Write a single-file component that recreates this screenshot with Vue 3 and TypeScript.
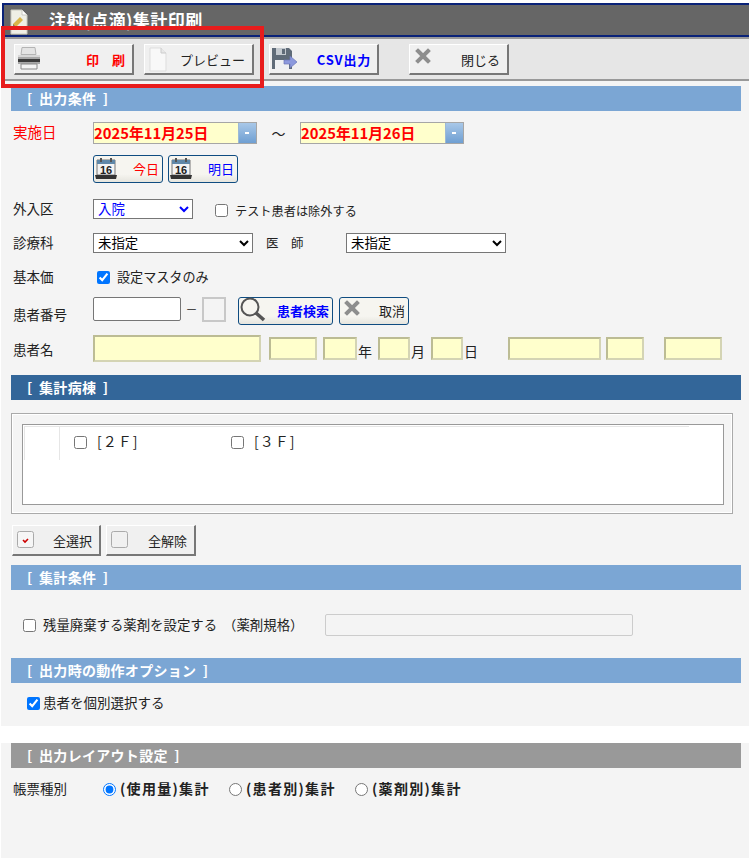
<script setup lang="ts">
import { ref } from 'vue'

const excludeTest = ref(false)
const masterOnly = ref(true)
const wardChecks = ref([
  { label: '[２Ｆ]', on: false },
  { label: '[３Ｆ]', on: false },
])
const wasteDrug = ref(false)
const pickPatient = ref(true)
const reportType = ref('use')
const reportTypes = [
  { id: 'use', label: '(使用量)集計' },
  { id: 'patient', label: '(患者別)集計' },
  { id: 'drug', label: '(薬剤別)集計' },
]
</script>

<template>
  <div class="root">
    <div class="main">
      <div class="title">
        <svg class="title-icon" width="18" height="26" viewBox="0 0 18 26">
          <path d="M1 1h11l5 5v19H1z" fill="#efefe6" stroke="#c9c9c0" />
          <path d="M12 1v5h5" fill="#fff" stroke="#c9c9c0" />
          <path d="M3 15l7-7 3 3-7 7-3 1z" fill="#d9b64a" />
          <path d="M3 15l3 3-3 1z" fill="#777" />
        </svg>
        <span class="title-text">注射(点滴)集計印刷</span>
      </div>

      <div class="toolbar">
        <button class="tool w120">
          <svg width="26" height="26" viewBox="0 0 26 26">
            <path d="M6 1.5h13l1 7H5z" fill="#e4e4e4" stroke="#b4b4b4" />
            <path d="M2 9h22v9H2z" fill="#a8a8a8" />
            <path d="M2 9h22v2H2z" fill="#d8d8d8" />
            <path d="M2 13h22v3H2z" fill="#3c3c3c" />
            <path d="M5 18h16v5H5z" fill="#f4f4f4" stroke="#8a8a8a" />
          </svg>
          <span class="t-red bold">印　刷</span>
        </button>
        <button class="tool w110">
          <svg width="26" height="26" viewBox="0 0 26 26">
            <path d="M4 2h11l5 5v18H4z" fill="#f8f8f8" stroke="#ddd" />
            <path d="M15 2v5h5" fill="#e8e8e8" stroke="#ccc" />
          </svg>
          <span>プレビュー</span>
        </button>
        <button class="tool w110 ml15">
          <svg width="26" height="24" viewBox="0 0 26 24">
            <path d="M1 1h17l3 3v18H1z" fill="#5f6b78" />
            <path d="M5 1h10v7H5z" fill="#c3c9cf" />
            <path d="M11 2h3v5h-3z" fill="#5f6b78" />
            <path d="M4 13h14v9H4z" fill="#eef0f2" />
            <path d="M13 13h6V9l7 6-7 6v-4h-6z" fill="#8c99dd" stroke="#6a76b8" stroke-width=".7" />
          </svg>
          <span class="t-blue bold csv">CSV出力</span>
        </button>
        <button class="tool w100 ml30">
          <svg class="x" width="16" height="16" viewBox="0 0 16 16">
            <path d="M3 3l10 10M13 3L3 13" stroke="#8e8e8e" stroke-width="4" stroke-linecap="square" />
          </svg>
          <span>閉じる</span>
        </button>
      </div>

      <div class="form">
        <h2 class="head light">[ 出力条件 ]</h2>

        <div class="row date-row">
          <label class="lab t-red strong">実施日</label>
          <div class="date">
            <input class="date-input" value="2025年11月25日" />
            <span class="date-btn"></span>
          </div>
          <span class="tilde">～</span>
          <div class="date">
            <input class="date-input" value="2025年11月26日" />
            <span class="date-btn"></span>
          </div>
        </div>

        <div class="row today-row">
          <button class="mini w70">
            <svg width="22" height="22" viewBox="0 0 22 22">
              <path d="M2 2h18v15H2z" fill="#f4f4f4" stroke="#777" />
              <path d="M2 2h18v4H2z" fill="#5f87a8" />
              <path d="M5 0h2v4H5zM15 0h2v4h-2z" fill="#555" />
              <path d="M0 17h22l-1 4H1z" fill="#333" />
              <text x="11" y="15.5" text-anchor="middle" class="cal">16</text>
            </svg>
            <span class="t-red">今日</span>
          </button>
          <button class="mini w70 ml5">
            <svg width="22" height="22" viewBox="0 0 22 22">
              <path d="M2 2h18v15H2z" fill="#f4f4f4" stroke="#777" />
              <path d="M2 2h18v4H2z" fill="#5f87a8" />
              <path d="M5 0h2v4H5zM15 0h2v4h-2z" fill="#555" />
              <path d="M0 17h22l-1 4H1z" fill="#333" />
              <text x="11" y="15.5" text-anchor="middle" class="cal">16</text>
            </svg>
            <span class="t-blue">明日</span>
          </button>
        </div>

        <div class="row r-gairai">
          <label class="lab">外入区</label>
          <select class="sel w100 t-blue"><option>入院</option></select>
          <label class="check small ml22">
            <input v-model="excludeTest" type="checkbox" />
            <span>テスト患者は除外する</span>
          </label>
        </div>

        <div class="row r-ka">
          <label class="lab">診療科</label>
          <select class="sel w160"><option>未指定</option></select>
          <label class="lab2">医　師</label>
          <select class="sel w160"><option>未指定</option></select>
        </div>

        <div class="row r-base">
          <label class="lab">基本価</label>
          <label class="check ml4">
            <input v-model="masterOnly" type="checkbox" />
            <span>設定マスタのみ</span>
          </label>
        </div>

        <div class="row r-no">
          <label class="lab low">患者番号</label>
          <input class="plain" />
          <span class="dash">－</span>
          <input class="square" />
          <button class="mini w95 ml12">
            <svg class="lens" width="26" height="26" viewBox="0 0 26 26">
              <circle cx="10" cy="10" r="8.5" fill="none" stroke="#555" stroke-width="2" />
              <path d="M16 16l8 7" stroke="#555" stroke-width="3.6" />
            </svg>
            <span class="t-blue bold">患者検索</span>
          </button>
          <button class="mini w70 ml6">
            <svg class="x" width="16" height="16" viewBox="0 0 16 16">
              <path d="M3 3l10 10M13 3L3 13" stroke="#8e8e8e" stroke-width="4" stroke-linecap="square" />
            </svg>
            <span>取消</span>
          </button>
        </div>

        <div class="row r-name">
          <label class="lab low name">患者名</label>
          <input class="yl big" />
          <input class="yl w48 ml8" />
          <input class="yl w34 ml6" />
          <span class="unit">年</span>
          <input class="yl w32" />
          <span class="unit">月</span>
          <input class="yl w32" />
          <span class="unit">日</span>
          <input class="yl w93 ml24" />
          <input class="yl w38 ml5" />
          <input class="yl w58 ml20" />
        </div>

        <h2 class="head dark h2">[ 集計病棟 ]</h2>

        <div class="ward-frame">
          <div class="ward">
            <div class="ward-lines">
              <div class="ward-blank"></div>
              <label v-for="w in wardChecks" :key="w.label" class="ward-item">
                <input v-model="w.on" type="checkbox" />
                <span>{{ w.label }}</span>
              </label>
            </div>
          </div>
        </div>

        <div class="row r-all">
          <button class="tool2 w89">
            <svg width="18" height="18" viewBox="0 0 18 18">
              <rect x=".5" y=".5" width="16" height="16" rx="2" fill="#f6f6f6" stroke="#aaa" />
              <path d="M6 9l2 2 3-3" fill="none" stroke="#c00" stroke-width="1.6" />
            </svg>
            <span>全選択</span>
          </button>
          <button class="tool2 w90">
            <svg width="18" height="18" viewBox="0 0 18 18">
              <rect x=".5" y=".5" width="16" height="16" rx="2" fill="#f0f0f0" stroke="#aaa" />
            </svg>
            <span>全解除</span>
          </button>
        </div>

        <h2 class="head light h3">[ 集計条件 ]</h2>

        <div class="row r-waste">
          <label class="check">
            <input v-model="wasteDrug" type="checkbox" />
            <span>残量廃棄する薬剤を設定する</span>
          </label>
          <span class="spec">（薬剤規格）</span>
          <input class="spec-input" disabled />
        </div>

        <h2 class="head light h4">[ 出力時の動作オプション ]</h2>

        <div class="row r-pick">
          <label class="check tight">
            <input v-model="pickPatient" type="checkbox" />
            <span>患者を個別選択する</span>
          </label>
        </div>
      </div>

      <div class="lower">
        <h2 class="head gray">[ 出力レイアウト設定 ]</h2>
        <div class="row r-type">
          <label class="lab">帳票種別</label>
          <label v-for="t in reportTypes" :key="t.id" class="radio">
            <input v-model="reportType" type="radio" name="type" :value="t.id" />
            <span>{{ t.label }}</span>
          </label>
        </div>
      </div>
    </div>
    <div class="mark"></div>
  </div>
</template>

<style scoped>
.root {
  position: relative;
  min-height: 858px;
  display: flex;
  font-family: "Noto Sans CJK JP", "Noto Sans", sans-serif;
  font-size: 13px;
  color: #222;
}
.main {
  flex: 1;
  margin-left: 1px;
  display: flex;
  flex-direction: column;
  min-width: 0;
}
button { font-family: inherit; font-size: 13px; color: #222; cursor: default; }
input, select { font-family: inherit; box-sizing: border-box; }

.title {
  margin: 3px 0 0 1px;
  height: 34px;
  box-sizing: border-box;
  background: #666;
  border-top: 2px solid #0a2278;
  border-bottom: 2px solid #0a2278;
  border-left: 2px solid #0a2278;
  display: flex;
  align-items: center;
  padding-left: 6px;
  overflow: hidden;
}
.title-icon { flex: none; margin-top: 3px; }
.title-text {
  margin-left: 21px;
  color: #fff;
  font-size: 17px;
  font-weight: 700;
  letter-spacing: .5px;
  line-height: 20px;
}

.toolbar {
  height: 44px;
  box-sizing: border-box;
  background: #e6e6e6;
  border-top: 2px solid #999;
  border-bottom: 2px solid #999;
  padding: 5px 0 0 13px;
  display: flex;
  align-items: flex-start;
}
.tool, .tool2 {
  height: 31px;
  box-sizing: border-box;
  background: #f0f0f0;
  border: 1px solid;
  border-color: #fff #777 #777 #fff;
  border-width: 1px 2px 2px 1px;
  border-radius: 0;
  display: flex;
  align-items: center;
  justify-content: space-between;
  padding: 0 7px 0 1px;
  margin: 0;
}
.tool + .tool { margin-left: 10px; }
.tool.ml15 { margin-left: 15px; }
.tool.ml30 { margin-left: 30px; }
.tool .x { margin-left: 4px; }
.x { margin-top: -6px; flex: none; }
.tool2 { padding: 0 7px 0 4px; }
.tool2 + .tool2 { margin-left: 5px; }
.csv { letter-spacing: .8px; margin-right: -1px; }
.w120 { width: 120px; }
.w110 { width: 110px; }
.w100 { width: 100px; }
.w89 { width: 89px; }
.w90 { width: 90px; }
.w95 { width: 95px; }
.w70 { width: 70px; }
.w160 { width: 160px; }
.w48 { width: 48px; }
.w34 { width: 34px; }
.w32 { width: 32px; }
.w93 { width: 93px; }
.w38 { width: 38px; }
.w58 { width: 58px; }

.t-red { color: #f00; }
.t-blue { color: #00f; }
.bold { font-weight: 700; }

.form {
  background: #f4f4f4;
  padding: 5px 0 14px;
}
.head {
  margin: 0 8px 0 10px;
  height: 25px;
  line-height: 24px;
  padding-left: 16px;
  font-size: 14px;
  font-weight: 700;
  color: #fff;
  letter-spacing: .3px;
  word-spacing: 3px;
}
.light { background: #7ba6d4; }
.dark { background: #336699; }
.gray { background: #999; }
.h2 { margin-top: 13px; }
.h3 { margin-top: 9px; }
.h4 { margin-top: 22px; }

.row { display: flex; align-items: center; padding-left: 12px; }
.lab {
  width: 80px;
  flex: none;
  font-size: 13.5px;
  line-height: 20px;
  padding-bottom: 2px;
  box-sizing: border-box;
  height: 22px;
}
.lab.strong { font-size: 14.5px; }
.lab.low { align-self: flex-end; margin-bottom: -1px; }
.lab.name { margin-bottom: 1px; }
.lab2 { width: 80px; margin-left: 13px; flex: none; font-size: 12.5px; padding-bottom: 2px; }

.date-row { margin-top: 11px; height: 22px; }
.date {
  width: 164px;
  height: 22px;
  box-sizing: border-box;
  border: 1px solid #a6a6a6;
  background: #ffc;
  display: flex;
}
.date-input {
  flex: 1;
  min-width: 0;
  border: 0;
  background: transparent;
  padding: 0 0 2px 0;
  color: #f00;
  font-size: 14.8px;
  font-weight: 700;
  outline: 0;
}
.date-btn {
  width: 17px;
  flex: none;
  background: linear-gradient(#a9c8e8, #6f9fd2);
  border-left: 1px solid #9cb9d6;
  position: relative;
}
.date-btn::after {
  content: "";
  position: absolute;
  left: 6px;
  top: 9px;
  width: 4px;
  height: 2px;
  background: #fff;
}
.tilde { width: 43px; text-align: center; font-size: 14px; }

.today-row { margin-top: 11px; height: 28px; padding-left: 92px; }
.mini {
  height: 28px;
  box-sizing: border-box;
  background: linear-gradient(#f6f5f0 70%, #e6e5de);
  border: 1px solid #0f4c81;
  border-radius: 3px;
  display: flex;
  align-items: center;
  justify-content: space-between;
  padding: 0 3px 0 1px;
  margin: 0;
}
.mini span { line-height: 20px; }
.mini svg { flex: none; }
.mini .lens { align-self: flex-start; margin-top: -1px; }
.mini .x { margin-left: 3px; }
.ml5 { margin-left: 5px; }
.ml6 { margin-left: 6px; }
.ml8 { margin-left: 8px; }
.ml12 { margin-left: 12px; }
.ml20 { margin-left: 20px; }
.ml22 { margin-left: 22px; }
.ml24 { margin-left: 24px; }
.ml4 { margin-left: 4px; }
.cal { font: 700 11px "Liberation Sans", sans-serif; fill: #222; }

.r-gairai { margin-top: 16px; height: 20px; }
.r-ka { margin-top: 14px; height: 20px; }
.r-base { margin-top: 14px; height: 20px; }
.r-no { margin-top: 10px; height: 28px; align-items: flex-start; }
.r-name { margin-top: 10px; height: 27px; }
.sel {
  height: 20px;
  font-family: "Liberation Sans", "Noto Sans CJK JP", sans-serif;
  font-size: 13.4px;
  padding: 0;
  background: #fff;
  flex: none;
}
.check {
  display: flex;
  align-items: center;
  font-size: 13.1px;
}
.check span { padding-bottom: 2px; }
.check input { margin: 0 7px 0 0; width: 13px; height: 13px; }
.check.small { font-size: 12.2px; margin-top: 2px; }
.check.small span { padding-bottom: 0; padding-top: 1px; }
.check.tight { margin-left: 14px; font-size: 13.5px; }
.check.tight input { margin-right: 3px; }
.r-waste .check { margin-left: 10px; font-size: 13.4px; }

.plain {
  width: 88px;
  height: 24px;
  background: #fff;
  border: 1px solid #767676;
  border-radius: 2px;
}
.dash { width: 21px; text-align: center; font-size: 12px; line-height: 24px; }
.square {
  width: 24px;
  height: 25px;
  background: #f4f4f4;
  border: 2px solid #c8c8c8;
}
.yl {
  height: 23px;
  background: #ffc;
  border: 2px solid;
  border-color: #bcbc94 #d4d4b4 #d4d4b4 #bcbc94;
  padding: 0;
  flex: none;
}
.yl.big { width: 168px; height: 27px; }
.unit {
  width: 21px;
  padding-left: 1px;
  box-sizing: border-box;
  font-size: 14px;
  align-self: flex-end;
  line-height: 20px;
  margin-bottom: 1px;
}

.ward-frame {
  margin: 13px 16px 0 10px;
  height: 101px;
  box-sizing: border-box;
  border: 1px solid #aaa;
  padding: 10px 8px 8px 10px;
  box-shadow: inset 0 0 0 1px #fff;
}
.ward {
  height: 81px;
  box-sizing: border-box;
  border: 1px solid #999;
  background: #fff;
  padding: 1px 0 0 1px;
}
.ward-lines { display: flex; height: 33px; width: 665px; border-top: 1px solid #e6e6e6; }
.ward-blank { width: 36px; border: 1px solid #e6e6e6; border-width: 0 1px 0 1px; flex: none; box-sizing: border-box; }
.ward-item {
  width: 157px;
  box-sizing: border-box;
  padding: 7px 0 0 14px;
  display: flex;
  align-items: flex-start;
  font-size: 14px;
  letter-spacing: 1px;
  line-height: 15px;
  flex: none;
}
.ward-item input { margin: 2px 10px 0 0; width: 13px; height: 13px; flex: none; }

.r-all { margin-top: 11px; padding-left: 11px; height: 31px; }
.r-waste { margin-top: 24px; height: 22px; font-size: 13.4px; }
.spec { margin-left: 6px; width: 102px; flex: none; padding-bottom: 2px; }
.spec-input {
  width: 308px;
  height: 22px;
  background: #f4f4f4;
  border: 1px solid #ccc;
  border-radius: 2px;
}
.r-pick { margin-top: 11px; height: 18px; }

.lower {
  flex: 1;
  margin-top: 17px;
  background: #f4f4f4;
}
.r-type { margin-top: 11px; height: 20px; }
.radio {
  display: flex;
  align-items: center;
  font-weight: 700;
  font-size: 14px;
  letter-spacing: 1.3px;
  width: 126px;
  flex: none;
}
.radio span { padding-bottom: 2px; }
.lab + .radio { margin-left: 10px; }
.radio input { margin: 0 4px 0 0; width: 13px; height: 13px; flex: none; }

.mark {
  position: absolute;
  left: 1px;
  top: 26px;
  width: 263px;
  height: 62px;
  box-sizing: border-box;
  border: 4px solid #e81c1c;
  pointer-events: none;
}
</style>
